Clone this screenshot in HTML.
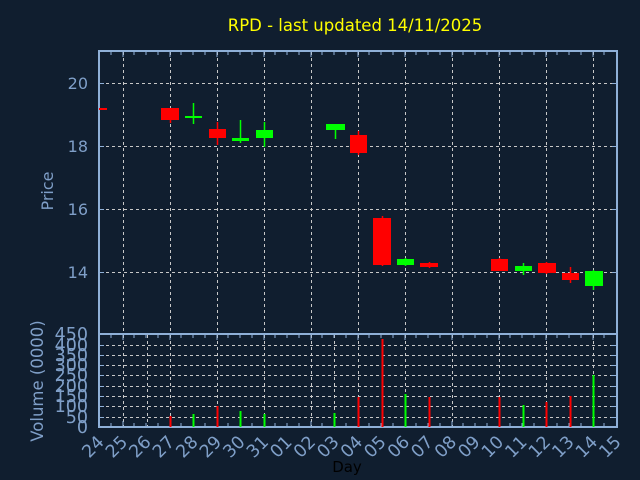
<!DOCTYPE html>
<html><head><meta charset="utf-8"><style>
html,body{margin:0;padding:0;background:#101e2f;}
svg{display:block}
text{font-family:"DejaVu Sans","Liberation Sans",sans-serif;}
</style></head><body>
<svg width="640" height="480" viewBox="0 0 640 480" xmlns="http://www.w3.org/2000/svg">
<rect width="640" height="480" fill="#101e2f"/>
<text x="355" y="31" fill="#ffff00" font-size="16.5" text-anchor="middle">RPD - last updated 14/11/2025</text>
<g stroke="#c8c8c8" stroke-width="1" stroke-dasharray="3,3" fill="none">
<path d="M123.5 52V334M170.5 52V334M217.5 52V334M264.5 52V334M311.5 52V334M358.5 52V334M405.5 52V334M452.5 52V334M499.5 52V334M546.5 52V334M593.5 52V334"/>
<path d="M100 83.5H616M100 146.5H616M100 209.5H616M100 272.5H616"/>
<path d="M123.5 335V427M147.5 335V427M170.5 335V427M217.5 335V427M264.5 335V427M311.5 335V427M334.5 335V427M358.5 335V427M405.5 335V427M452.5 335V427M499.5 335V427M546.5 335V427M593.5 335V427"/>
<path d="M100 345.5H616M100 355.5H616M100 365.5H616M100 375.5H616M100 386.5H616M100 396.5H616M100 406.5H616M100 417.5H616"/>
</g>
<g stroke="#8fb0d8" stroke-width="2" fill="none">
<rect x="99" y="51" width="518" height="376"/>
<line x1="99" y1="334" x2="617" y2="334"/>
</g>
<g stroke="#8fb0d8" stroke-width="1">
<path d="M111 52v3M123 52v5M134 52v3M146 52v3M158 52v3M170 52v5M181 52v3M193 52v3M205 52v3M217 52v5M228 52v3M240 52v3M252 52v3M264 52v5M275 52v3M287 52v3M299 52v3M311 52v5M322 52v3M334 52v3M346 52v3M358 52v5M369 52v3M381 52v3M393 52v3M405 52v5M416 52v3M428 52v3M440 52v3M452 52v5M463 52v3M475 52v3M487 52v3M499 52v5M510 52v3M522 52v3M534 52v3M546 52v5M557 52v3M569 52v3M581 52v3M593 52v5M604 52v3"/>
<path d="M111 426v-3M123 426v-5M134 426v-3M146 426v-3M158 426v-3M170 426v-5M181 426v-3M193 426v-3M205 426v-3M217 426v-5M228 426v-3M240 426v-3M252 426v-3M264 426v-5M275 426v-3M287 426v-3M299 426v-3M311 426v-5M322 426v-3M334 426v-3M346 426v-3M358 426v-5M369 426v-3M381 426v-3M393 426v-3M405 426v-5M416 426v-3M428 426v-3M440 426v-3M452 426v-5M463 426v-3M475 426v-3M487 426v-3M499 426v-5M510 426v-3M522 426v-3M534 426v-3M546 426v-3M557 426v-3M569 426v-3M581 426v-3M593 426v-5M604 426v-3"/>
<path d="M111 335v3M123 335v5M134 335v3M146 335v3M158 335v3M170 335v5M181 335v3M193 335v3M205 335v3M217 335v5M228 335v3M240 335v3M252 335v3M264 335v5M275 335v3M287 335v3M299 335v3M311 335v5M322 335v3M334 335v3M346 335v3M358 335v5M369 335v3M381 335v3M393 335v3M405 335v5M416 335v3M428 335v3M440 335v3M452 335v5M463 335v3M475 335v3M487 335v3M499 335v5M510 335v3M522 335v3M534 335v3M546 335v5M557 335v3M569 335v3M581 335v3M593 335v5M604 335v3"/>
<path d="M100 83.5h4M100 146.5h4M100 209.5h4M100 272.5h4M612 83.5h4M612 146.5h4M612 209.5h4M612 272.5h4"/>
<path d="M100 345.5h4M100 355.5h4M100 365.5h4M100 375.5h4M100 386.5h4M100 396.5h4M100 406.5h4M100 417.5h4M611 345.5h5M611 355.5h5M611 365.5h5M611 375.5h5M611 386.5h5M611 396.5h5M611 406.5h5M611 417.5h5"/>
</g>
<g fill="#7f9fc8" font-size="16" text-anchor="end">
<text x="88" y="89">20</text><text x="88" y="152">18</text><text x="88" y="215">16</text><text x="88" y="278">14</text>
</g>
<g fill="#7f9fc8" font-size="17.5" text-anchor="end">
<text x="88" y="340">450</text><text x="88" y="351">400</text><text x="88" y="361">350</text><text x="88" y="371">300</text><text x="88" y="381">250</text><text x="88" y="392">200</text><text x="88" y="402">150</text><text x="88" y="412">100</text><text x="88" y="423">50</text><text x="88" y="433">0</text>
</g>
<text transform="translate(53,191) rotate(-90)" fill="#7f9fc8" font-size="16" text-anchor="middle">Price</text>
<text transform="translate(43,381) rotate(-90)" fill="#7f9fc8" font-size="16.5" text-anchor="middle">Volume (0000)</text>
<text x="347" y="472" fill="#000" font-size="15" text-anchor="middle">Day</text>
<g fill="#7f9fc8" font-size="17.5" text-anchor="end">
<text transform="translate(105,443) rotate(-45)">24</text>
<text transform="translate(128.5,443) rotate(-45)">25</text>
<text transform="translate(152,443) rotate(-45)">26</text>
<text transform="translate(175.5,443) rotate(-45)">27</text>
<text transform="translate(199,443) rotate(-45)">28</text>
<text transform="translate(222.5,443) rotate(-45)">29</text>
<text transform="translate(246,443) rotate(-45)">30</text>
<text transform="translate(269.5,443) rotate(-45)">31</text>
<text transform="translate(293,443) rotate(-45)">01</text>
<text transform="translate(316.5,443) rotate(-45)">02</text>
<text transform="translate(340,443) rotate(-45)">03</text>
<text transform="translate(363.5,443) rotate(-45)">04</text>
<text transform="translate(387,443) rotate(-45)">05</text>
<text transform="translate(410.5,443) rotate(-45)">06</text>
<text transform="translate(434,443) rotate(-45)">07</text>
<text transform="translate(457.5,443) rotate(-45)">08</text>
<text transform="translate(481,443) rotate(-45)">09</text>
<text transform="translate(504.5,443) rotate(-45)">10</text>
<text transform="translate(528,443) rotate(-45)">11</text>
<text transform="translate(551.5,443) rotate(-45)">12</text>
<text transform="translate(575,443) rotate(-45)">13</text>
<text transform="translate(598.5,443) rotate(-45)">14</text>
<text transform="translate(622,443) rotate(-45)">15</text>
</g>
<g stroke-width="1.5">
<path stroke="#ff0000" d="M170.5 118V123M217.5 122V145M358.5 131V155M382.5 216V266M570.5 267V283M546.5 262V274M499.5 258V271M429.5 262V268"/>
<path stroke="#00ff00" d="M193.5 103V124M240.5 120V143M264.5 122V147M335.5 130V139M523.5 263V275M593.5 270V290M405.5 258V266"/>
</g>
<g fill="#ff0000">
<rect x="99" y="108" width="8" height="2"/>
<rect x="161" y="108" width="18" height="12"/>
<rect x="209" y="129" width="17" height="9"/>
<rect x="350" y="135" width="17" height="18"/>
<rect x="373" y="218" width="18" height="47"/>
<rect x="420" y="263" width="18" height="4"/>
<rect x="491" y="259" width="17" height="12"/>
<rect x="538" y="263" width="18" height="10"/>
<rect x="562" y="273" width="17" height="7"/>
</g>
<g fill="#00ff00">
<rect x="185" y="116" width="17" height="2"/>
<rect x="232" y="138" width="17" height="3"/>
<rect x="256" y="130" width="17" height="8"/>
<rect x="326" y="124" width="19" height="6"/>
<rect x="397" y="259" width="17" height="6"/>
<rect x="515" y="266" width="17" height="5"/>
<rect x="585" y="271" width="18" height="15"/>
</g>
<g stroke-width="2">
<path stroke="#ff0000" d="M170.5 416V427M217.5 406V427M358.5 397V427M382.5 339V427M429.5 397V427M499.5 397V427M546.5 402V427M570.5 396V427"/>
<path stroke="#00ff00" d="M193.5 414V427M240.5 411V427M264.5 414V427M334.5 413V427M405.5 394V427M523.5 405V427M593.5 375V427"/>
</g>
</svg>
</body></html>
